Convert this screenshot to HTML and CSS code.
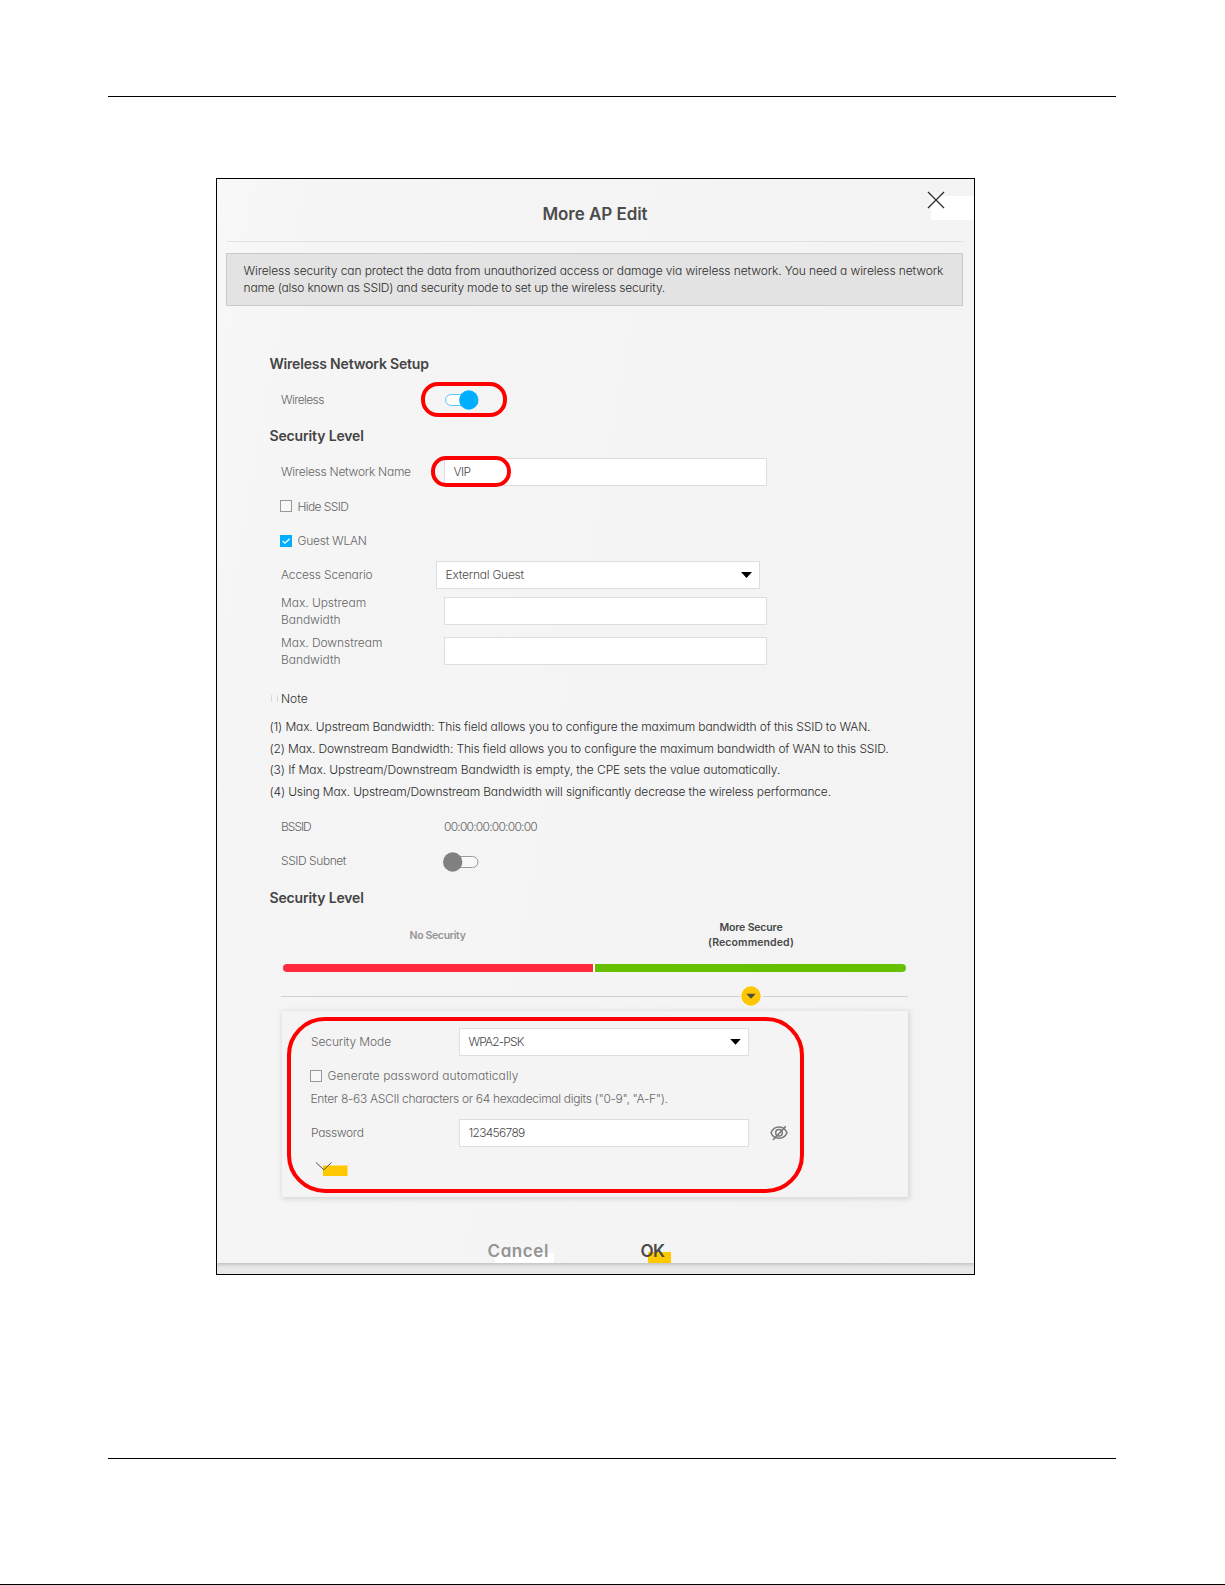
FILE: index.html
```
<!DOCTYPE html>
<html lang="en">
<head>
<meta charset="utf-8">
<title>More AP Edit</title>
<link rel="stylesheet" href="styles.css">
</head>
<body>
<hr class="rule">
<main class="frame">
  <section class="modal">
    <header class="modal-head">
      <h1>More AP Edit</h1>
      <div class="close-bg"></div>
      <svg class="close" viewBox="0 0 18 18"><path d="M1 1L17 17M17 1L1 17"/></svg>
    </header>
    <div class="info"><span class="i1">Wireless security can protect the data from unauthorized access or damage via wireless network. You need a wireless network</span><br><span class="i2">name (also known as SSID) and security mode to set up the wireless security.</span></div>

    <div class="content">
      <h2 class="h-setup">Wireless Network Setup</h2>
      <div class="row r-wireless">
        <span class="label tight">Wireless</span>
        <svg class="toggle" viewBox="0 0 36 22"><rect x="1.5" y="5.5" width="28" height="11" rx="5.5" fill="#fff" stroke="#5cc8f7"/><circle cx="24.8" cy="11" r="9.7" fill="#00aeff"/></svg>
        <div class="mark mark-toggle"></div>
      </div>
      <h2>Security Level</h2>
      <div class="row r-name">
        <span class="label l-name">Wireless Network Name</span>
        <div class="field"><span class="tight">VIP</span></div>
        <div class="mark mark-name"></div>
      </div>
      <div class="row r-hide"><i class="box"></i><span class="tight">Hide SSID</span></div>
      <div class="row r-guest"><svg class="tick" viewBox="0 0 12 12"><rect width="12" height="12" fill="#00aeff"/><path d="M2.6 6L5 8.2L9.6 3.8"/></svg><span class="l-guest">Guest WLAN</span></div>
      <div class="row r-access">
        <span class="label l-access">Access Scenario</span>
        <div class="field select"><span class="l-ext">External Guest</span><i class="arrow"></i></div>
      </div>
      <div class="row r-band"><span class="label">Max. Upstream<br>Bandwidth</span><div class="field"></div></div>
      <div class="row r-band r-down"><span class="label">Max. Downstream<br>Bandwidth</span><div class="field"></div></div>

      <div class="note"><i></i><i></i><span>Note</span></div>
      <div class="notes">
        <p>(1) Max. Upstream Bandwidth: This field allows you to configure the maximum bandwidth of this SSID to WAN.</p>
        <p>(2) Max. Downstream Bandwidth: This field allows you to configure the maximum bandwidth of WAN to this SSID.</p>
        <p class="n3">(3) If Max. Upstream/Downstream Bandwidth is empty, the CPE sets the value automatically.</p>
        <p class="n4">(4) Using Max. Upstream/Downstream Bandwidth will significantly decrease the wireless performance.</p>
      </div>
      <div class="row r-bssid"><span class="label l-bssid">BSSID</span><span class="mac">00:00:00:00:00:00</span></div>
      <div class="row r-subnet">
        <span class="label l-subnet">SSID Subnet</span>
        <svg class="toggle off" viewBox="0 0 36 22"><rect x="6.5" y="5.5" width="28.5" height="11" rx="5.5" fill="#f8f8f8" stroke="#9a9a9a"/><circle cx="9.7" cy="11" r="9.7" fill="#808080"/></svg>
      </div>
      <h2 class="h-level">Security Level</h2>
      <div class="levels"><div class="none">No Security</div><div class="more">More Secure<br><span>(Recommended)</span></div></div>
      <div class="bar"><i class="red"></i><i class="green"></i></div>
      <div class="pointer"><i></i><svg viewBox="0 0 20 20"><circle cx="10" cy="10" r="9.7" fill="#fec600"/><path d="M5.3 7.8H14.7L10 12.8Z" fill="#4a4a40"/></svg><i></i></div>

      <div class="panel">
        <div class="row r-mode">
          <span class="label l-mode">Security Mode</span>
          <div class="field select"><span class="l-wpa">WPA2-PSK</span><i class="arrow"></i></div>
        </div>
        <div class="row r-gen"><i class="box"></i><span class="l-gen">Generate password automatically</span></div>
        <div class="hint">Enter 8-63 ASCII characters or 64 hexadecimal digits ("0-9", "A-F").</div>
        <div class="row r-pass">
          <span class="label l-pass">Password</span>
          <div class="field"><span class="l-num">123456789</span></div>
          <svg class="eye" viewBox="0 0 18 16"><path d="M1 7.8C2.6 4 5.4 2 9 2S15.4 4 17 7.8C15.4 11.6 12.6 13.3 9 13.3S2.6 11.6 1 7.8Z"/><circle cx="9" cy="7.7" r="3.3"/><path d="M15.8 1.2L3 15"/></svg>
        </div>
        <svg class="more-toggle" viewBox="0 0 34 16"><rect x="8" y="4.5" width="24.5" height="10.5" fill="#ffc800"/><path d="M1 1.5L8.8 8.8L16.5 1.5" fill="none" stroke="#4d4d45"/></svg>
        <div class="mark mark-panel"></div>
      </div>

      <div class="actions"><span class="cancel">Cancel</span><span class="ok">OK</span></div>
    </div>
  </section>
</main>
<hr class="rule rule-foot">
</body>
</html>
```
FILE: styles.css
```
* { box-sizing: border-box; }
body {
  margin: 0;
  height: 1585px;
  padding-top: 96px;
  border-bottom: 1px solid #000;
  background: #fff;
  font: 300 12px/17px Inter, "Liberation Sans", sans-serif;
  font-feature-settings: "cv11";
  color: #666;
}
.rule { height: 1px; margin: 0 109px 0 108px; border: 0; background: #000; }
.rule-foot { margin-top: 183px; }
.frame {
  width: 759px;
  height: 1097px;
  margin: 81px 0 0 216px;
  border: 1px solid #000;
  background: #e8e8e8;
  overflow: hidden;
}
.modal {
  height: 1084px;
  background: linear-gradient(100deg, #f8f8f8, #f5f5f5 12%, #f4f4f4 60%, #f3f3f3);
  box-shadow: 0 1px 3px 1px #c4c4c4;
}
.modal-head {
  position: relative;
  height: 63px;
  margin: 0 11px 0 10px;
  padding-top: 25px;
  border-bottom: 1px solid #e1e1e1;
}
h1 { margin: 0; font-size: 17px; line-height: 21px; font-weight: 600; text-align: center; color: #4c4c4c; letter-spacing: -.05px; }
.close-bg { position: absolute; left: 704px; top: 17px; width: 43px; height: 24px; background: #fff; }
.close { position: absolute; left: 699.5px; top: 12px; width: 18px; height: 18px; fill: none; stroke: #333; stroke-width: 1.4; }
.info {
  height: 53px;
  margin: 11px 11px 0 9px;
  padding: 8px 0 0 16.5px;
  border: 1px solid #c9c9c9;
  background: #e3e3e3;
  line-height: 17.3px;
  color: #2b2b2b;
  white-space: nowrap;
}
.i1 { letter-spacing: -.102px; }
.i2 { letter-spacing: -.178px; }
.content { padding: 47px 66px 0 52.5px; }
h2 { margin: 0; font-size: 14px; line-height: 22px; font-weight: 600; color: #444; letter-spacing: -.15px; }
.h-setup { letter-spacing: -.19px; }
.row { position: relative; display: flex; align-items: center; height: 28px; padding-left: 11.5px; white-space: nowrap; }
.label { width: 163px; letter-spacing: -.05px; }
.tight { letter-spacing: -.6px; }
.field {
  display: flex;
  align-items: center;
  justify-content: space-between;
  width: 323px;
  height: 28px;
  padding: 0 8px 0 8.5px;
  border: 1px solid #dedede;
  background: #fff;
  color: #4a4a4a;
}
.arrow { width: 11px; height: 6px; margin-right: -1px; background: #000; clip-path: polygon(0 0, 100% 0, 50% 100%); }
.toggle { width: 36px; height: 22px; }
.r-wireless { height: 50px; }
.r-wireless .label { padding-bottom: 2px; }
.r-name { margin-top: 11px; }
.l-name { letter-spacing: -.27px; }
.r-name .label, .r-name .field span { padding-bottom: 1px; }
.l-guest { letter-spacing: -.25px; }
.l-access { letter-spacing: -.17px; }
.l-ext { letter-spacing: -.24px; }
.box, .tick { width: 12px; height: 12px; margin: 0 5.5px 0 -1px; flex: none; }
.box { border: 1px solid #999; background: #f8f8f8; }
.tick path { fill: none; stroke: #fff; stroke-width: 1.3; }
.r-hide { margin-top: 6px; }
.r-guest { margin-top: 7px; }
.r-access { margin-top: 6px; }
.r-access .label { width: 155px; }
.r-access .field { width: 324px; }
.r-access .label, .l-ext, .l-guest { padding-bottom: 1px; }
.r-band { height: 34px; margin-top: 5px; }
.r-down { margin-top: 6px; }
.note { display: flex; align-items: center; height: 20px; margin-top: 20px; color: #333; }
.note i { width: 1px; height: 7px; margin: 1px 4px 0 1px; background: #d8d8d8; }
.note span { margin-left: -.5px; }
.notes { margin-top: 8px; color: #2b2b2b; letter-spacing: -.14px; white-space: nowrap; }
.notes p { margin: 0; line-height: 21.67px; }
.notes .n3 { letter-spacing: -.08px; }
.notes .n4 { letter-spacing: -.15px; }
.r-bssid { margin-top: 10px; }
.l-bssid { letter-spacing: -1px; }
.mac { letter-spacing: -.76px; }
.r-subnet { margin-top: 7px; height: 28px; }
.r-subnet .label { padding-bottom: 2px; }
.l-subnet { width: 161.5px; letter-spacing: -.44px; }
.h-level { margin-top: 11px; }
.levels { display: flex; height: 30px; margin-top: 11px; align-items: center; font-size: 10.5px; line-height: 15px; font-weight: 600; text-align: center; }
.none { width: 336px; padding-top: 2px; color: #949494; letter-spacing: -.34px; }
.more { width: 291px; padding-top: 1px; color: #474747; letter-spacing: -.15px; }
.more span { letter-spacing: .12px; }
.bar { display: flex; gap: 2px; height: 8px; margin: 14px 0 0 13.5px; width: 623px; background: #fff; border-radius: 4px; }
.bar i { height: 8px; }
.red { width: 310px; border-radius: 4px 0 0 4px; background: #ff2a3c; }
.green { width: 311px; border-radius: 0 4px 4px 0; background: #66bf00; }
.pointer { display: flex; align-items: center; height: 20px; width: 627px; margin: 14.5px 0 0 11.5px; }
.pointer i { height: 1px; background: #d0d0d0; }
.pointer i:first-child { width: 459px; }
.pointer i:last-child { flex: 1; }
.pointer svg { width: 20px; height: 20px; margin: 0 2px 0 1px; }
.panel {
  position: relative;
  width: 626.5px;
  height: 186px;
  margin: 4.5px 0 0 12px;
  padding: 17px 0 0 29.5px;
  background: #f4f4f4;
  box-shadow: 1px 1px 5px 1px #d6d6d6;
}
.panel .row { padding-left: 0; }
.panel .label { width: 148px; }
.panel .field { width: 290px; }
.l-mode { letter-spacing: -.12px; }
.l-wpa { letter-spacing: -.87px; }
.r-gen { margin-top: 6px; }
.l-gen { letter-spacing: .08px; }
.hint { margin-left: -.5px; letter-spacing: -.32px; white-space: nowrap; }
.r-pass { margin-top: 12px; }
.l-pass { letter-spacing: -.32px; }
.l-num { letter-spacing: -.7px; }
.eye { width: 18px; height: 16px; margin-left: 20.5px; fill: none; stroke: #777; stroke-width: 1.5; }
.more-toggle { display: block; width: 34px; height: 16px; margin: 14px 0 0 4px; }
.mark { position: absolute; border: 4px solid #f00; }
.mark-toggle { left: 151.5px; top: 7px; width: 86px; height: 35px; border-radius: 17px; }
.mark-name { left: 161.5px; top: -2px; width: 80px; height: 31px; border-radius: 15px; }
.mark-panel { left: 5px; top: 6px; width: 517px; height: 176px; border-radius: 38px; }
.actions { display: flex; gap: 92px; height: 24px; margin: 43px 0 0 218px; font-size: 17px; line-height: 22px; font-weight: 600; }
.actions span { height: 23px; background-repeat: no-repeat; }
.cancel { width: 66px; color: #949494; letter-spacing: .6px; background-image: linear-gradient(#fff, #fff); background-size: 59px 10px; background-position: 7px 13px; }
.ok { width: 31px; margin-left: -5px; color: #4a4a4a; letter-spacing: -.5px; background-image: linear-gradient(#ffc800, #ffc800); background-size: 23px 11px; background-position: 7px 12px; }
```
